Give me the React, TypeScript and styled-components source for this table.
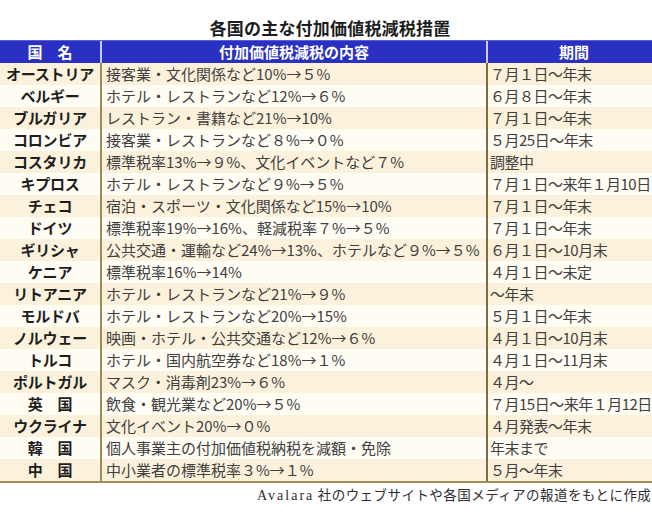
import React from "react";
import styled, { createGlobalStyle } from "styled-components";

const Global = createGlobalStyle`
  html, body { margin: 0; padding: 0; background: #ffffff; }
  body { width: 652px; height: 521px; overflow: hidden; font-family: "Noto Sans CJK JP", "Noto Sans", sans-serif; }
`;

const Page = styled.div`
  width: 652px;
  height: 521px;
  overflow: hidden;
  padding-top: 15px;
  box-sizing: border-box;
`;

const Title = styled.h1`
  margin: 0;
  height: 25px;
  line-height: 25px;
  font-size: 17px;
  font-weight: 700;
  color: #1c1c1c;
  text-align: center;
  padding-left: 8px;
  letter-spacing: 0.2px;
`;

const Table = styled.div`
  width: 660px;
  border-bottom: 2px solid #a08d5c;
`;

const cols = "100px 386px 1fr";

const HeaderRow = styled.div`
  display: grid;
  grid-template-columns: ${cols};
  height: 23px;
  background: #2a30c2;
  border-top: 1px solid #5a5fd6;
  box-sizing: border-box;
`;

const HeadCell = styled.div<{ $first?: boolean }>`
  color: #ffffff;
  font-weight: 700;
  font-size: 15px;
  line-height: 22px;
  text-align: center;
  border-left: ${(p) => (p.$first ? "none" : "2px solid #c9cbf2")};
  white-space: nowrap;
`;

const Row = styled.div<{ $alt: boolean }>`
  display: grid;
  grid-template-columns: ${cols};
  height: 22px;
  background: ${(p) => (p.$alt ? "#fcf2dc" : "#fffcf4")};
`;

const NameCell = styled.div`
  font-weight: 700;
  font-size: 15px;
  line-height: 22px;
  color: #1e1e1e;
  text-align: center;
  white-space: nowrap;
  letter-spacing: -0.2px;
`;

const DescCell = styled.div`
  font-size: 15px;
  line-height: 22px;
  color: #404040;
  padding-left: 4px;
  border-left: 2px solid #9c8a58;
  white-space: nowrap;
  overflow: hidden;
`;

const PeriodCell = styled.div`
  font-size: 15px;
  line-height: 22px;
  color: #404040;
  padding-left: 2px;
  border-left: 2px solid #7e6c3c;
  white-space: nowrap;
  letter-spacing: -0.5px;
`;

const Footer = styled.div`
  padding-left: 257px;
  margin-top: 2px;
  font-size: 13.5px;
  line-height: 18px;
  color: #2e2e2e;
  white-space: nowrap;
  letter-spacing: 0.45px;
`;

const Latin = styled.span`
  font-family: "Liberation Serif", serif;
  font-size: 14px;
  letter-spacing: 2px;
`;

const rows: [string, string, string][] = [
  ["オーストリア", "接客業・文化関係など10%→５%", "７月１日～年末"],
  ["ベルギー", "ホテル・レストランなど12%→６%", "６月８日～年末"],
  ["ブルガリア", "レストラン・書籍など21%→10%", "７月１日～年末"],
  ["コロンビア", "接客業・レストランなど８%→０%", "５月25日～年末"],
  ["コスタリカ", "標準税率13%→９%、文化イベントなど７%", "調整中"],
  ["キプロス", "ホテル・レストランなど９%→５%", "７月１日～来年１月10日"],
  ["チェコ", "宿泊・スポーツ・文化関係など15%→10%", "７月１日～年末"],
  ["ドイツ", "標準税率19%→16%、軽減税率７%→５%", "７月１日～年末"],
  ["ギリシャ", "公共交通・運輸など24%→13%、ホテルなど９%→５%", "６月１日～10月末"],
  ["ケニア", "標準税率16%→14%", "４月１日～未定"],
  ["リトアニア", "ホテル・レストランなど21%→９%", "～年末"],
  ["モルドバ", "ホテル・レストランなど20%→15%", "５月１日～年末"],
  ["ノルウェー", "映画・ホテル・公共交通など12%→６%", "４月１日～10月末"],
  ["トルコ", "ホテル・国内航空券など18%→１%", "４月１日～11月末"],
  ["ポルトガル", "マスク・消毒剤23%→６%", "４月～"],
  ["英　国", "飲食・観光業など20%→５%", "７月15日～来年１月12日"],
  ["ウクライナ", "文化イベント20%→０%", "４月発表～年末"],
  ["韓　国", "個人事業主の付加価値税納税を減額・免除", "年末まで"],
  ["中　国", "中小業者の標準税率３%→１%", "５月～年末"],
];

export default function App() {
  return (
    <>
      <Global />
      <Page>
        <Title>各国の主な付加価値税減税措置</Title>
        <Table>
          <HeaderRow>
            <HeadCell $first>国　名</HeadCell>
            <HeadCell>付加価値税減税の内容</HeadCell>
            <HeadCell>期間</HeadCell>
          </HeaderRow>
          {rows.map(([name, desc, period], i) => (
            <Row key={name} $alt={i % 2 === 0}>
              <NameCell>{name}</NameCell>
              <DescCell>{desc}</DescCell>
              <PeriodCell>{period}</PeriodCell>
            </Row>
          ))}
        </Table>
        <Footer>
          <Latin>Avalara</Latin> 社のウェブサイトや各国メディアの報道をもとに作成
        </Footer>
      </Page>
    </>
  );
}
